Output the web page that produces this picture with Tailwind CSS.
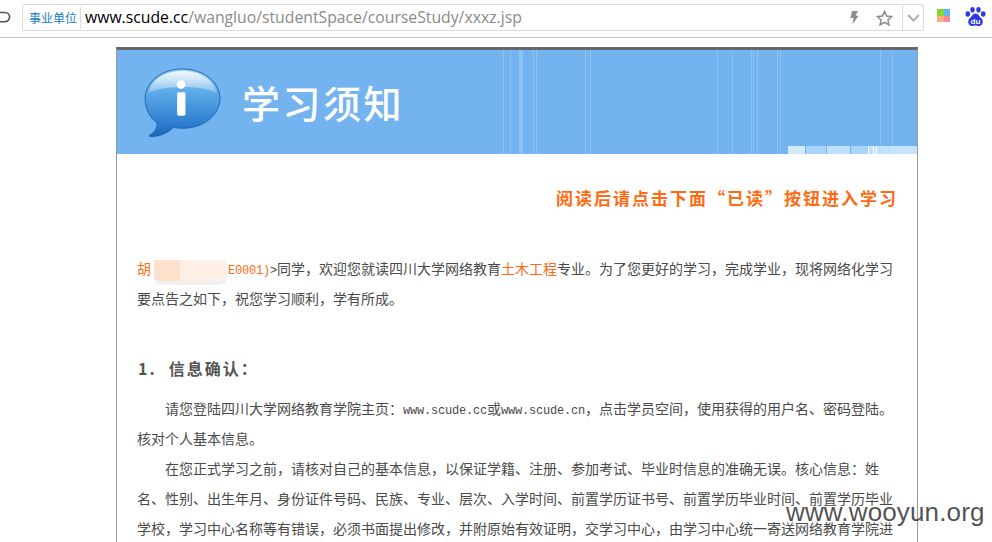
<!DOCTYPE html>
<html lang="zh-CN">
<head>
  <meta charset="UTF-8">
  <title>学习须知</title>
  <script src="https://cdn.jsdelivr.net/npm/@tailwindcss/browser@4"></script>
</head>
<body class="bg-white overflow-hidden">
  <div class="relative h-[542px] w-[992px] overflow-hidden font-['Noto_Sans_CJK_SC',sans-serif]">

    <!-- browser toolbar -->
    <header class="flex h-[38px] items-start border-b border-[#c8c8c8] pt-1">
      <svg class="mt-[5px] w-[12px] h-[16px] shrink-0 mr-[10px]" viewBox="0 0 12 16" fill="none" stroke="#555" stroke-width="1.6">
        <path d="M0 3.5h5a4.6 4.6 0 0 1 0 9.2H0"/>
      </svg>
      <div class="flex h-[27px] w-[902px] items-center rounded-[2px] border border-[#dcdcdc]">
        <span class="w-[58px] shrink-0 border-r border-[#dcdcdc] pl-[6px] text-[12px] leading-[22px] text-[#1a78c8]">事业单位</span>
        <span class="ml-[4px] font-['Open_Sans',sans-serif] text-[15.750px] text-[#8a8a8a]"><span class="text-black">www.scude.cc</span>/wangluo/studentSpace/courseStudy/xxxz.jsp</span>
        <div class="ml-auto flex h-full items-center">
          <svg class="w-[10px] h-[14px] mr-[17px]" viewBox="0 0 10 14" fill="#8f8f8f"><path d="M3 0h6L6.6 4.8H9.6L3.4 13.6 4.6 7H1.4z"/></svg>
          <svg class="w-[17px] h-[16px] mr-[9px]" viewBox="0 0 17 16" fill="none" stroke="#8a8a8a" stroke-width="1.5"><path d="M8.5 1.4l2.1 4.6 5 .6-3.7 3.4 1 4.9-4.4-2.5-4.4 2.5 1-4.9L1.4 6.6l5-.6z"/></svg>
          <div class="flex h-full w-[21px] items-center justify-center border-l border-[#dcdcdc]">
            <svg class="w-[13px] h-[8px]" viewBox="0 0 13 8" fill="none" stroke="#a9b0b6" stroke-width="2"><path d="M1 1l5.500 5.500L12 1"/></svg>
          </div>
        </div>
      </div>
      <div class="ml-[13px] mt-[5px] grid h-[13px] w-[13px] grid-cols-2 gap-0 shrink-0">
        <i class="bg-[#86d92a]"></i><i class="bg-[#5cb8f5]"></i><i class="bg-[#fdb07c]"></i><i class="bg-[#f58a92]"></i>
      </div>
      <svg class="ml-[15px] mt-[3px] w-[21px] h-[20px] shrink-0" viewBox="0 0 21 20" fill="#2d38e0">
        <ellipse cx="2.800" cy="7" rx="2.300" ry="2.800"/><ellipse cx="7.500" cy="2.800" rx="2.200" ry="2.800"/><ellipse cx="13.500" cy="2.800" rx="2.200" ry="2.800"/><ellipse cx="18.200" cy="7" rx="2.300" ry="2.800"/>
        <path d="M10.500 6.500c3 0 3.500 3 6 5 2.200 2 1.500 7.500-2.500 7.500-1.500 0-2-.5-3.500-.5s-2 .5-3.500.5c-4 0-4.700-5.500-2.500-7.500 2.500-2 3-5 6-5z"/>
        <text x="10.500" y="17" text-anchor="middle" font-family="Liberation Sans" font-weight="700" font-size="8" fill="#fff">du</text>
      </svg>
    </header>

    <main class="ml-[116px] mt-[9px] w-[802px] border-x border-[#999] border-t-[3px] border-t-[#66666a]">
      <!-- banner -->
      <section class="relative flex h-[104px] items-center bg-[#72b3f0] pl-[27px]">
        <svg class="absolute inset-0 h-[104px] w-[800px]" viewBox="0 0 800 104" fill="#fff">
          <g opacity=".2">
            <rect x="386" width="1" height="104"/><rect x="393" width="1" height="104"/><rect x="402" width="4" height="104"/><rect x="416" width="1" height="104"/><rect x="419" width="1" height="104"/><rect x="468" width="1" height="104"/><rect x="473" width="1" height="104"/><rect x="600" width="1" height="104"/><rect x="615" width="1" height="104"/><rect x="634" width="1" height="104"/><rect x="636" width="1" height="104"/><rect x="640" width="1" height="104"/><rect x="660" width="1" height="104"/><rect x="663" width="1" height="104"/><rect x="763" width="1" height="104"/><rect x="775" width="1" height="104"/>
          </g>
        </svg>
        <svg class="relative w-[78px] h-[70px] shrink-0 mt-[2px]" viewBox="0 0 80 72">
          <defs>
            <linearGradient id="bubble" x1="0" y1="0" x2="0" y2="1">
              <stop offset="0" stop-color="#9fd2f5"/><stop offset=".35" stop-color="#5ba9e6"/><stop offset=".8" stop-color="#2f7fd0"/><stop offset="1" stop-color="#1f62b4"/>
            </linearGradient>
            <linearGradient id="gloss" x1="0" y1="0" x2="0" y2="1">
              <stop offset="0" stop-color="#fff" stop-opacity=".85"/><stop offset="1" stop-color="#fff" stop-opacity=".2"/>
            </linearGradient>
          </defs>
          <path d="M39.500 1C61 1 78 14.500 78 31.500S61 62 39.500 62c-3.500 0-6.500-.3-9.500-1-4.500 5.500-14 9.800-23.500 9.500-1.200 0-1.500-1-.6-1.500 4.500-2.500 7.500-7 7.600-12.500C5.500 51 1 41.500 1 31.500 1 14.500 18 1 39.500 1z" fill="url(#bubble)" stroke="#1d66b8" stroke-width="1"/>
          <path d="M39.500 3C58 3 72 12 74.500 26 62 20 50 19.500 39.500 19.500S17 20 4.500 26C7 12 21 3 39.500 3z" fill="url(#gloss)"/>
          <circle cx="38" cy="17" r="4.500" fill="#fff"/>
          <rect x="34" y="25" width="8.500" height="24" rx="1.500" fill="#fff"/>
        </svg>
        <h1 class="relative ml-[20px] text-[38px] font-medium leading-none tracking-[2.500px] text-white">学习须知</h1>
        <div class="absolute bottom-0 right-0 flex h-[8px]">
          <i class="w-[17px] bg-[#d2eafc]"></i><i class="w-[20px] bg-[#a8d5fb] ml-px"></i><i class="w-[23px] bg-[#c0e1fb] ml-px"></i><i class="w-[17px] bg-[#a8d5fb] ml-px"></i><i class="w-[1px] bg-[#fff]"></i><i class="w-[4px] bg-[#c0e1fb]"></i><i class="w-[1px] bg-[#fff]"></i><i class="w-[2px] bg-[#c0e1fb]"></i><i class="w-[1px] bg-[#fff]"></i><i class="w-[13px] bg-[#c0e1fb]"></i><i class="w-[27px] bg-[#c6e4fc]"></i>
        </div>
      </section>

      <!-- notice -->
      <section class="px-5 pb-4 pt-[29px] text-[14px] leading-[30px] text-[#4a4a4a] whitespace-nowrap">
        <p class="text-right text-[17px] font-bold tracking-[2px] text-[#ff6a13] -mr-px">阅读后请点击下面“已读”按钮进入学习</p>

        <p class="mt-[40px]">
          <span class="text-[#ff6a13]">胡</span><span class="relative inline-block w-[77px] h-[14px] align-[-2px] leading-none">
            <span class="absolute left-[3px] top-[-2px] h-[25px] w-[73px] overflow-hidden rounded-b-[8px] bg-[#f0f0f0]"><span class="flex h-[21px] rounded-b-[6px] overflow-hidden"><i class="w-[26px] bg-[#ffe0cc]"></i><i class="flex-1 bg-[#feefe6]"></i></span></span>
          </span><span class="font-['Liberation_Mono',monospace] text-[12px] leading-none tracking-[-0.2px] text-[#ff6a13]">E0001)</span><span class="font-['Liberation_Mono',monospace] text-[12px] leading-none tracking-[-0.2px]">&gt;</span>同学，欢迎您就读四川大学网络教育<span class="text-[#ff6a13]">土木工程</span>专业。为了您更好的学习，完成学业，现将网络化学习<br>
          要点告之如下，祝您学习顺利，学有所成。
        </p>

        <h2 class="mt-[40px] pl-px text-[16px] font-bold tracking-[2px] text-[#555]"><span class="mr-[12px]">1.</span>信息确认：</h2>

        <p class="mt-[10px] indent-[28px]">请您登陆四川大学网络教育学院主页：<span class="font-['Liberation_Mono',monospace] text-[12px] leading-none tracking-[-0.2px]">www.scude.cc</span>或<span class="font-['Liberation_Mono',monospace] text-[12px] leading-none tracking-[-0.2px]">www.scude.cn</span>，点击学员空间，使用获得的用户名、密码登陆。<br>核对个人基本信息。</p>
        <p class="indent-[28px]">在您正式学习之前，请核对自己的基本信息，以保证学籍、注册、参加考试、毕业时信息的准确无误。核心信息：姓<br>名、性别、出生年月、身份证件号码、民族、专业、层次、入学时间、前置学历证书号、前置学历毕业时间、前置学历毕业<br>学校，学习中心名称等有错误，必须书面提出修改，并附原始有效证明，交学习中心，由学习中心统一寄送网络教育学院进</p>
      </section>
    </main>

    <!-- watermark over the page -->
    <div class="absolute left-[786px] top-[495px] font-['Liberation_Sans',sans-serif] text-[26px] leading-[34px] tracking-[0.150px] text-[#333]/85">www.wooyun.org</div>
  </div>
</body>
</html>
